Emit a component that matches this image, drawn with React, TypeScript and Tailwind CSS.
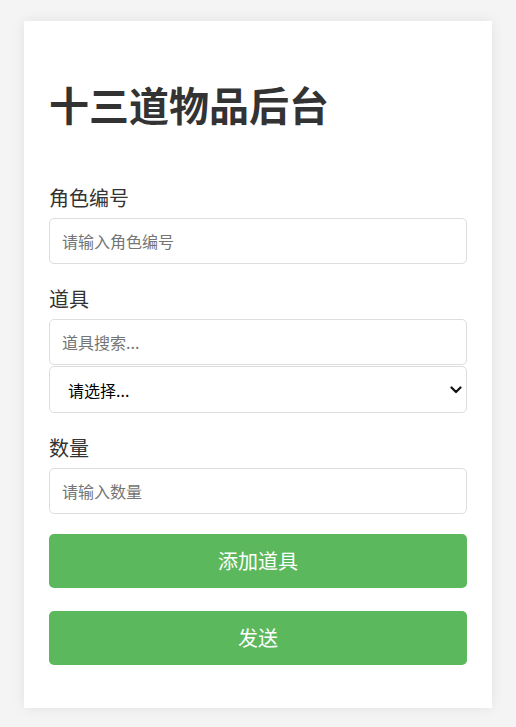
const font = { fontFamily: '"Noto Sans CJK SC", "Noto Sans", sans-serif' };

const inputCls =
  "block w-full h-[46px] px-3 rounded-[5px] border border-[#dddddd] bg-white text-[16px] text-[#333] placeholder:text-[#757575] outline-none";

function Field({ label, children }: { label: string; children: React.ReactNode }) {
  return (
    <div>
      <label className="block text-[20px] leading-[30px] mb-[5px] text-[#333]">{label}</label>
      {children}
    </div>
  );
}

const App = () => {
  return (
    <div className="min-h-screen bg-[#f4f4f4] pt-[21px] pb-[19px]" style={font}>
      <div className="ml-[24px] w-[468px] bg-white px-[25px] pt-[53px] pb-[43px] shadow-[0_0_12px_rgba(0,0,0,0.08)]">
        <h1 className="text-[40px] leading-[60px] font-bold text-[#333]">十三道物品后台</h1>

        <div className="mt-[49px] flex flex-col gap-[20px]">
          <Field label="角色编号">
            <input className={inputCls} placeholder="请输入角色编号" />
          </Field>

          <Field label="道具">
            <input className={inputCls} placeholder="道具搜索..." />
            <div className="relative mt-px">
              <select
                className="block w-full h-[47px] pl-[18px] pr-10 appearance-none rounded-[5px] border border-[#dddddd] bg-white text-[16px] text-black outline-none"
                defaultValue=""
              >
                <option value="">请选择...</option>
              </select>
              <svg
                className="pointer-events-none absolute right-[5px] top-1/2 -translate-y-1/2"
                width="12"
                height="8"
                viewBox="0 0 12 8"
              >
                <path d="M1.5 1.5 L6 6 L10.5 1.5" fill="none" stroke="#111" strokeWidth="2.2" strokeLinecap="round" strokeLinejoin="round" />
              </svg>
            </div>
          </Field>

          <Field label="数量">
            <input className={inputCls} placeholder="请输入数量" />
          </Field>
        </div>

        <button className="mt-[20px] block w-full h-[54px] rounded-[5px] bg-[#5cb85c] text-white text-[20px]">
          添加道具
        </button>
        <button className="mt-[23px] block w-full h-[54px] rounded-[5px] bg-[#5cb85c] text-white text-[20px]">
          发送
        </button>
      </div>
    </div>
  );
};

export default App;
